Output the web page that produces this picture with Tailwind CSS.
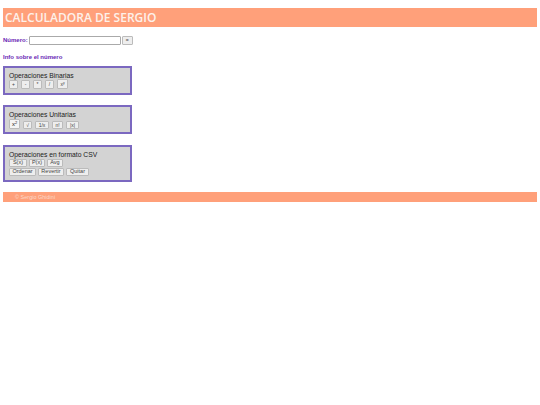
<!DOCTYPE html>
<html lang="es">
 <head>
  <meta charset="utf-8"/>
  <title>Calculadora de Sergio</title>
  <script src="https://cdn.jsdelivr.net/npm/@tailwindcss/browser@4"></script>
 </head>
 <body class="bg-white font-['Liberation_Sans',sans-serif] text-[6.75px] text-black">
  <div class="px-[3px] pt-[8px]">
   <header class="h-[19px] bg-[#ffa07a] pl-[2px] flex items-center">
    <h1 class="font-['Open_Sans',sans-serif] text-[12px] font-semibold leading-none text-[#fdf1ea]">CALCULADORA DE SERGIO</h1>
   </header>

   <div class="mt-[9px] h-[9px] flex items-center gap-[1px]">
    <label class="font-bold text-[#6a1fb5] text-[6px]">Número:</label>
    <input type="text" class="w-[92px] h-[9px] bg-white border border-[#aaa] rounded-[1px]"/>
    <button class="w-[11px] h-[9px] bg-[#eeeeee] border border-[#bbb] rounded-[1px] text-[5px] leading-none text-[#444]">=</button>
   </div>

   <p class="mt-[8px] font-bold text-[#6a1fb5] text-[6px] leading-[8px]">Info sobre el número</p>

   <section class="mt-[5px] w-[129px] h-[29px] bg-[#d3d3d3] border-2 border-[#7b68c0] pl-[4px] pt-[3px]">
    <h2 class="h-[8px] leading-[10px] text-[#222]">Operaciones Binarias</h2>
    <div class="flex items-end gap-[3px] h-[10px]">
     <button class="w-[9px] h-[9px] bg-[#eeeeee] border border-[#bbb] rounded-[1px] text-[5px] leading-none text-[#444]">+</button>
     <button class="w-[9px] h-[9px] bg-[#eeeeee] border border-[#bbb] rounded-[1px] text-[5px] leading-none text-[#444]">-</button>
     <button class="w-[9px] h-[9px] bg-[#eeeeee] border border-[#bbb] rounded-[1px] text-[5px] leading-none text-[#444]">*</button>
     <button class="w-[9px] h-[9px] bg-[#eeeeee] border border-[#bbb] rounded-[1px] text-[5px] leading-none text-[#444]">/</button>
     <button class="w-[11px] h-[10px] bg-[#eeeeee] border border-[#bbb] rounded-[1px] text-[5px] leading-none text-[#444]">x<sup class="text-[3.5px]">y</sup></button>
    </div>
   </section>

   <section class="mt-[10px] w-[129px] h-[29px] bg-[#d3d3d3] border-2 border-[#7b68c0] pl-[4px] pt-[3px]">
    <h2 class="h-[8px] leading-[10px] text-[#222]">Operaciones Unitarias</h2>
    <div class="flex items-end gap-[3px] h-[11px]">
     <button class="w-[11px] h-[10px] bg-[#f4f4f4] border border-[#bbb] rounded-[1px] text-[6px] leading-none text-[#222]">x<sup class="text-[4px]">2</sup></button>
     <button class="w-[9px] h-[8px] bg-[#eeeeee] border border-[#bbb] rounded-[1px] text-[5px] leading-none text-[#444]">√</button>
     <button class="w-[14px] h-[8px] bg-[#eeeeee] border border-[#bbb] rounded-[1px] text-[5px] leading-none text-[#444]">1/x</button>
     <button class="w-[11px] h-[8px] bg-[#eeeeee] border border-[#bbb] rounded-[1px] text-[5px] leading-none text-[#444]">n!</button>
     <button class="w-[13px] h-[8px] bg-[#eeeeee] border border-[#bbb] rounded-[1px] text-[5px] leading-none text-[#444]">|x|</button>
    </div>
   </section>

   <section class="mt-[11px] w-[129px] h-[37px] bg-[#d3d3d3] border-2 border-[#7b68c0] pl-[4px] pt-[3px]">
    <h2 class="h-[8px] leading-[10px] text-[#222]">Operaciones en formato CSV</h2>
    <div class="flex gap-[2px] mt-[1px]">
     <button class="w-[18px] h-[8px] bg-[#eeeeee] border border-[#bbb] rounded-[1px] text-[5.5px] leading-none text-[#444]">S(x)</button>
     <button class="w-[16px] h-[8px] bg-[#eeeeee] border border-[#bbb] rounded-[1px] text-[5.5px] leading-none text-[#444]">P(x)</button>
     <button class="w-[16px] h-[8px] bg-[#eeeeee] border border-[#bbb] rounded-[1px] text-[5.5px] leading-none text-[#444]">Avg</button>
    </div>
    <div class="flex gap-[2px] mt-[1px]">
     <button class="w-[27px] h-[8px] bg-[#eeeeee] border border-[#bbb] rounded-[1px] text-[5.5px] leading-none text-[#444]">Ordenar</button>
     <button class="w-[26px] h-[8px] bg-[#eeeeee] border border-[#bbb] rounded-[1px] text-[5.5px] leading-none text-[#444]">Revertir</button>
     <button class="w-[23px] h-[8px] bg-[#eeeeee] border border-[#bbb] rounded-[1px] text-[5.5px] leading-none text-[#444]">Quitar</button>
    </div>
   </section>

   <footer class="mt-[10px] h-[10px] bg-[#ffa07a] pl-[12px] flex items-center text-[5.5px] text-[#fbd9c8]">© Sergio Ghidini</footer>
  </div>
 </body>
</html>
